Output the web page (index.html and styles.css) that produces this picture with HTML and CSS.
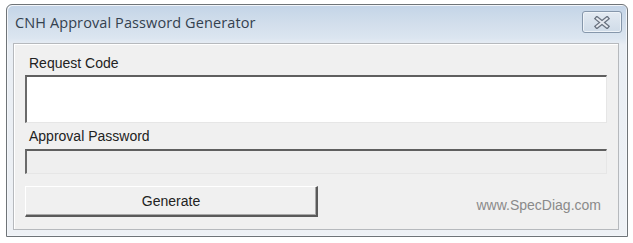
FILE: index.html
```html
<!DOCTYPE html>
<html>
<head>
<meta charset="utf-8">
<link rel="stylesheet" href="styles.css">
</head>
<body>
<div class="window">
  <div class="titlebar">
    <span class="title">CNH Approval Password Generator</span>
    <button class="close" aria-label="Close">
      <svg width="18" height="13" viewBox="0 0 18 13">
        <path d="M4 2.5 L14 10.5 M14 2.5 L4 10.5" stroke="#6a7380" stroke-width="4.4" stroke-linecap="square"/>
        <path d="M4 2.5 L14 10.5 M14 2.5 L4 10.5" stroke="#e6eaf0" stroke-width="1.8" stroke-linecap="square"/>
      </svg>
    </button>
  </div>
  <div class="frame">
    <div class="panel">
      <div class="label label-first">Request Code</div>
      <div class="field field-request"></div>
      <div class="label label-second">Approval Password</div>
      <div class="field field-password"></div>
      <div class="actions">
        <button class="btn">Generate</button>
        <span class="site">www.SpecDiag.com</span>
      </div>
    </div>
  </div>
</div>
</body>
</html>
```
FILE: styles.css
```css
html, body {
  margin: 0;
  padding: 0;
  background: #ffffff;
}
body {
  padding: 4px 0 0 6px;
  font-family: "Liberation Sans", Arial, sans-serif;
}
.window {
  width: 622px;
  height: 233px;
  border: 1px solid #6f7478;
  border-radius: 6px 6px 0 0;
  background: linear-gradient(#c3d4e7 0px, #d3dfec 20px, #dbe5f0 33px, #e9eef4 40px, #eef1f5 100%);
  display: flex;
  flex-direction: column;
  box-sizing: border-box;
  box-shadow: inset 1px 1px 0 #f3f6fa, inset -1px -1px 0 #f3f6fa;
}
.titlebar {
  height: 38px;
  display: flex;
  align-items: flex-start;
  justify-content: space-between;
  padding: 0 5px 0 8px;
  flex: none;
}
.title {
  font-family: "Open Sans", "Noto Sans", sans-serif;
  font-size: 14.5px;
  color: #34414f;
  line-height: 20px;
  margin-top: 8px;
  letter-spacing: 0.1px;
}
.close {
  margin-top: 6px;
  width: 40px;
  height: 22px;
  border: 1px solid #8697ab;
  border-radius: 3px;
  background: linear-gradient(#e3eaf2, #cfdbe8);
  box-shadow: inset 0 0 0 1px #eef3f8;
  display: flex;
  align-items: center;
  justify-content: center;
  padding: 0;
}
.frame {
  flex: 1;
  padding: 0 8px 6px 6px;
  display: flex;
}
.panel {
  flex: 1;
  border: 1px solid #b6b9bd;
  box-shadow: inset 1px 1px 0 #ffffff;
  background: #f0f0f0;
  padding: 11px 11px 0 11px;
  display: flex;
  flex-direction: column;
}
.label {
  font-size: 14px;
  line-height: 16px;
  color: #222222;
  padding-left: 4px;
}
.label-first { margin-bottom: 4px; }
.label-second { margin-top: 5px; margin-bottom: 5px; }
.field {
  border-top: 2px solid #5f5f5f;
  border-left: 2px solid #6a6a6a;
  border-right: 1px solid #e6e6e6;
  border-bottom: 1px solid #e6e6e6;
  box-sizing: border-box;
}
.field-request {
  height: 48px;
  background: #ffffff;
}
.field-password {
  height: 25px;
  background: #efefef;
}
.actions {
  margin-top: 12px;
  display: flex;
  align-items: center;
  justify-content: space-between;
}
.btn {
  width: 293px;
  height: 31px;
  font-family: "Liberation Sans", Arial, sans-serif;
  font-size: 14px;
  color: #222222;
  background: #f0f0f0;
  border-top: 1px solid #ffffff;
  border-left: 1px solid #ffffff;
  border-right: 2px solid #5a5a5a;
  border-bottom: 2px solid #5a5a5a;
  box-shadow: inset -1px -1px 0 #a8a8a8;
  padding: 0;
  box-sizing: border-box;
}
.site {
  font-size: 14px;
  color: #8a8a8a;
  margin-right: 6px;
  margin-top: 6px;
}
```
